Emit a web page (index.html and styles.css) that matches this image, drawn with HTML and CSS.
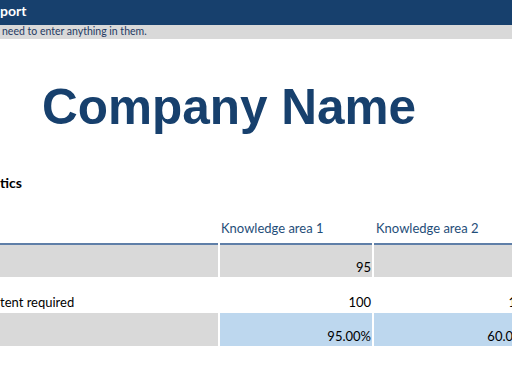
FILE: index.html
```html
<!DOCTYPE html>
<html>
<head>
<meta charset="utf-8">
<link rel="stylesheet" href="styles.css">
</head>
<body>
<div class="sheet">
  <div class="topbar">port</div>
  <div class="note">need to enter anything in them.</div>
  <div class="title">Company Name</div>
  <div class="section">tics</div>
  <div class="grid">
    <div class="head"></div>
    <div class="head">Knowledge area 1</div>
    <div class="head">Knowledge area 2</div>

    <div class="cell gray"></div>
    <div class="cell gray num">95</div>
    <div class="cell gray num"></div>

    <div class="cell">tent required</div>
    <div class="cell num">100</div>
    <div class="cell num">100</div>

    <div class="cell gray"></div>
    <div class="cell blue num">95.00%</div>
    <div class="cell blue num">60.00%</div>
  </div>
</div>
</body>
</html>
```

FILE: styles.css
```css
html, body {
  margin: 0;
  padding: 0;
  background: #ffffff;
}
.sheet {
  width: 512px;
  height: 376px;
  overflow: hidden;
  font-family: Lato, "Open Sans", sans-serif;
  color: #000;
}
.topbar {
  height: 25px;
  background: #17406d;
  color: #ffffff;
  font-weight: bold;
  font-size: 14px;
  line-height: 22px;
  white-space: nowrap;
}
.note {
  height: 14px;
  background: #d9d9d9;
  color: #1f3a63;
  font-size: 10.5px;
  line-height: 13px;
  padding-left: 2px;
  white-space: nowrap;
}
.title {
  height: 56px;
  margin-top: 40px;
  padding-left: 42px;
  font-family: "Liberation Sans", Arial, sans-serif;
  font-weight: bold;
  font-size: 49.5px;
  line-height: 56px;
  color: #17406d;
  white-space: nowrap;
}
.section {
  margin-top: 38px;
  height: 20px;
  font-weight: bold;
  font-size: 14px;
  line-height: 20px;
  white-space: nowrap;
}
.grid {
  margin-top: 24px;
  width: 540px;
  display: grid;
  grid-template-columns: 218px 152px 158px;
  grid-template-rows: 28px 33px 35px 34px;
  column-gap: 2px;
  font-size: 13px;
}
.head {
  color: #1f4e79;
  padding-left: 2px;
  line-height: 22px;
  border-bottom: 2px solid #5f7fa8;
  box-sizing: border-box;
  white-space: nowrap;
}
.grid .head:nth-child(2) { padding-left: 1px; }
.cell {
  display: flex;
  align-items: flex-end;
  padding: 0 1px 2px 0;
  box-sizing: border-box;
  white-space: nowrap;
  line-height: 16px;
  border-bottom: 1px solid #ffffff;
}
.cell.num { justify-content: flex-end; }
.gray { background: #d9d9d9; }
.blue { background: #bdd7ee; }
```
